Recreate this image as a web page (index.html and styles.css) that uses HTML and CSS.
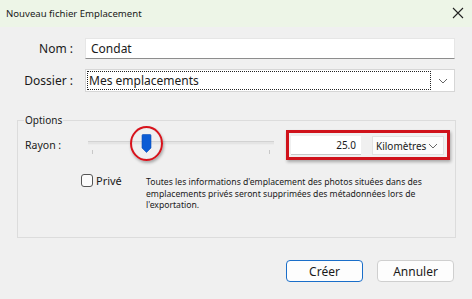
FILE: index.html
```html
<!DOCTYPE html>
<html lang="fr">
<head>
<meta charset="utf-8">
<title>Nouveau fichier Emplacement</title>
<link rel="stylesheet" href="styles.css">
</head>
<body>
<div class="dialog">
  <div class="titlebar">
    <span class="title">Nouveau fichier Emplacement</span>
    <svg class="close" width="12" height="12" viewBox="0 0 12 12"><path d="M1 1 L11 11 M11 1 L1 11" stroke="#222" stroke-width="1.1" fill="none"/></svg>
  </div>
  <div class="content">
    <div class="row row-nom">
      <label class="lbl">Nom :</label>
      <div class="textbox">Condat</div>
    </div>
    <div class="row row-dossier">
      <label class="lbl">Dossier :</label>
      <div class="select">
        <div class="focus">Mes emplacements</div>
        <svg class="chev" width="10" height="6" viewBox="0 0 10 6"><path d="M1 1 L5 5 L9 1" stroke="#666" stroke-width="1" fill="none"/></svg>
      </div>
    </div>
    <fieldset class="options">
      <legend>Options</legend>
      <div class="rayon-row">
        <span class="rayon-lbl">Rayon :</span>
        <div class="slider">
          <div class="track"></div>
          <div class="ticks"><span></span><span></span></div>
          <svg class="thumb" width="11" height="19" viewBox="0 0 11 19"><path d="M1 1.5 Q1 0.5 2 0.5 L9 0.5 Q10 0.5 10 1.5 L10 14 L5.5 18.5 L1 14 Z" fill="#0b5cd5" stroke="#0a4fb8" stroke-width="0.6"/></svg>
          <div class="ring"></div>
        </div>
        <div class="redbox">
          <div class="num">25.0</div>
          <div class="unit"><span>Kilomètres</span>
            <svg width="10" height="6" viewBox="0 0 10 6"><path d="M1 1 L5 5 L9 1" stroke="#666" stroke-width="1" fill="none"/></svg>
          </div>
        </div>
      </div>
      <div class="prive-row">
        <label class="check"><span class="box"></span>Privé</label>
        <p class="desc">Toutes les informations d'emplacement des photos situées dans des emplacements privés seront supprimées des métadonnées lors de l'exportation.</p>
      </div>
    </fieldset>
    <div class="buttons">
      <button class="btn primary">Créer</button>
      <button class="btn">Annuler</button>
    </div>
  </div>
</div>
</body>
</html>
```

FILE: styles.css
```css
* { box-sizing: border-box; }
html, body { margin: 0; padding: 0; }
body {
  width: 472px;
  height: 299px;
  overflow: hidden;
  background: #f0f0f0;
  font-family: "Noto Sans", "Segoe UI", sans-serif;
  font-size: 11.5px;
  color: #1a1a1a;
}
.dialog { width: 472px; height: 299px; }
.titlebar {
  height: 27px;
  background: #edf5e7;
  display: flex;
  align-items: center;
  justify-content: space-between;
  padding: 0 8px 1px 6px;
  font-size: 9.6px;
  color: #1a1a1a;
}
.content { padding: 11px 17px 0 17px; }
.row { display: flex; align-items: center; }
.lbl {
  width: 56px;
  text-align: right;
  margin-right: 12px;
  font-size: 12px;
}
.textbox {
  flex: 1;
  height: 21px;
  background: #fff;
  border: 1px solid #e6e6e6;
  border-bottom: 1px solid #8d8d8d;
  padding: 0 0 0 5px;
  line-height: 19px;
  font-size: 12px;
}
.row-dossier { margin-top: 10px; }
.select {
  flex: 1;
  height: 23px;
  background: #fff;
  border: 1px solid #d6d6d6;
  display: flex;
  align-items: center;
  padding: 1px;
}
.focus {
  flex: 1;
  height: 19px;
  border: 1px dotted #222;
  padding-left: 1px;
  line-height: 17px;
  font-size: 12px;
}
.chev { margin: 0 5px 0 7px; }
.options {
  margin: 21px 0 0 0;
  padding: 0 5px 0 7px;
  border: 1px solid #dcdcdc;
  height: 125px;
}
.options legend {
  padding: 0 1px;
  margin-left: -1px;
  font-size: 10px;
}
.rayon-row {
  display: flex;
  align-items: center;
  margin-top: 3px;
}
.rayon-lbl { width: 63px; font-size: 10.5px; }
.slider {
  position: relative;
  width: 186px;
  height: 30px;
}
.track {
  position: absolute;
  left: 0; right: 0; top: 11px;
  height: 4px;
  background: #e4e4e4;
  border-top: 1px solid #d2d2d2;
  border-bottom: 1px solid #ececec;
}
.ticks { position: absolute; left: 4px; right: 4px; top: 20px; display: flex; justify-content: space-between; }
.ticks span { width: 1px; height: 4px; background: #c8c8c8; }
.thumb { position: absolute; left: 53px; top: 4px; }
.ring {
  position: absolute;
  left: 42px; top: -4px;
  width: 33px; height: 35px;
  border: 2.5px solid #d8131c;
  border-radius: 50%;
  box-shadow: 1px 2px 3px rgba(0,0,0,0.3), inset 0 0 1px rgba(0,0,0,0.2);
}
.redbox {
  margin-left: 12px;
  width: 164px;
  height: 30px;
  border: 3px solid #d0121b;
  box-shadow: 1px 2px 3px rgba(0,0,0,0.3);
  display: flex;
  align-items: center;
  padding: 1px 3px 0 2px;
}
.num {
  width: 70px;
  height: 19px;
  background: #fff;
  border-bottom: 1px solid #c8c8c8;
  text-align: right;
  padding-right: 5px;
  line-height: 18px;
  font-size: 10px;
}
.unit {
  margin-left: 11px;
  flex: 1;
  height: 19px;
  background: #fbfbfb;
  border: 1px solid #e2e2e2;
  display: flex;
  align-items: center;
  justify-content: space-between;
  padding: 0 5px 0 3px;
  font-size: 10px;
}
.prive-row {
  display: flex;
  align-items: flex-start;
  margin-top: 13px;
}
.check {
  display: flex;
  align-items: center;
  margin-left: 56px;
  width: 65px;
  font-size: 11px;
}
.box {
  width: 12px; height: 13px;
  border: 1px solid #555;
  border-radius: 3px;
  background: #fbfbfb;
  margin-right: 3px;
}
.desc {
  margin: 4px 0 0 0;
  width: 285px;
  font-size: 8.65px;
  line-height: 11.7px;
}
.buttons {
  display: flex;
  justify-content: flex-end;
  gap: 14px;
  margin-top: 22px;
  padding-right: 1px;
}
.btn {
  width: 77px;
  height: 22px;
  border: 1px solid #cfcfcf;
  border-radius: 4px;
  background: #fdfdfd;
  font-family: "Noto Sans", "Segoe UI", sans-serif;
  font-size: 12px;
  color: #1a1a1a;
  padding: 0;
}
.btn.primary { border: 1.5px solid #1a6ec9; }
```
